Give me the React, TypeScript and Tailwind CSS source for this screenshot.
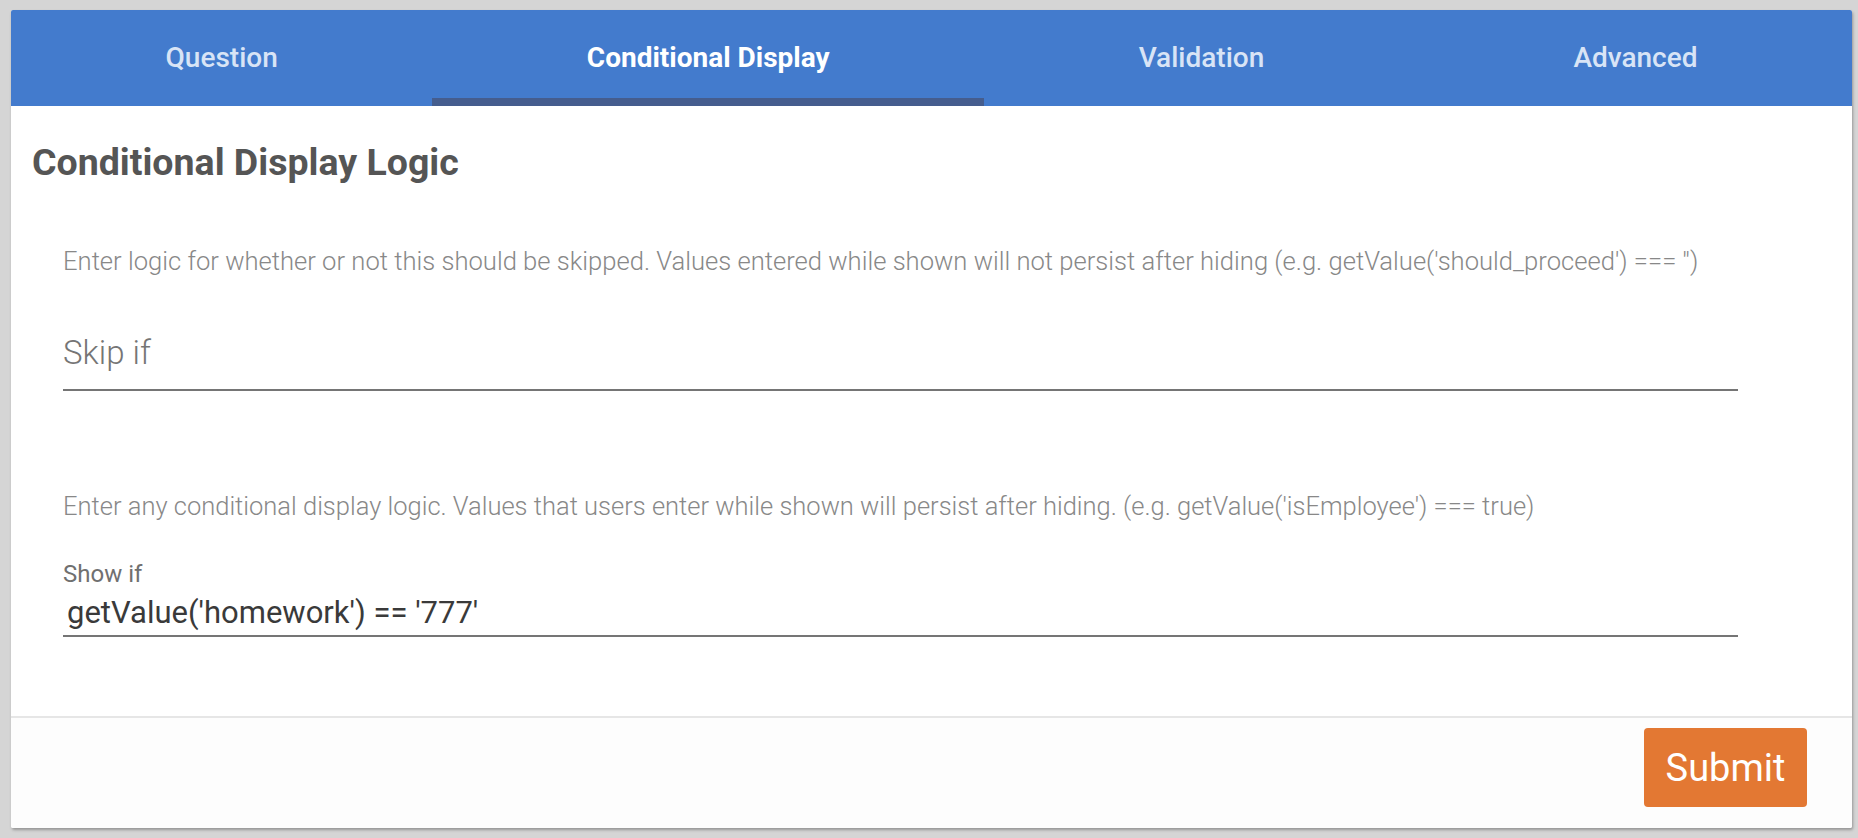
import React from "react";

const tabs = [
  { label: "Question", active: false },
  { label: "Conditional Display", active: true },
  { label: "Validation", active: false },
  { label: "Advanced", active: false },
];

export default function App() {
  return (
    <div
      className="w-full h-[838px] bg-[#d5d5d5] pl-[11px] pr-[6px] pt-[10px] pb-[10px]"
      style={{ fontFamily: "Roboto, 'Noto Sans', sans-serif" }}
    >
      <div className="h-full bg-white rounded-[2px] shadow-[1px_2px_3px_rgba(0,0,0,0.3)] flex flex-col overflow-hidden">
        {/* Tabs */}
        <div className="h-[96px] bg-[#437bcd] flex shrink-0">
          {tabs.map((t) => (
            <div
              key={t.label}
              className={
                t.active
                  ? "flex-auto relative flex items-center justify-center pb-[1px] text-[28px] font-bold text-white"
                  : "flex-auto relative flex items-center justify-center pb-[1px] text-[28px] font-medium text-[#d8e4f6]"
              }
            >
              {t.label}
              {t.active && (
                <div className="absolute left-0 right-0 bottom-0 h-[8px] bg-[#455d8e]" />
              )}
            </div>
          ))}
        </div>

        {/* Body */}
        <div className="flex-1 pl-[21px] pt-[34px]">
          <h1 className="text-[37.5px] leading-[44px] font-bold text-[#555555]">
            Conditional Display Logic
          </h1>
          <div className="ml-[31px] w-[1675px]">
            <p className="mt-[62px] text-[25.6px] leading-[30px] font-light text-[#888888] whitespace-nowrap">
              Enter logic for whether or not this should be skipped. Values entered while shown will not persist after hiding (e.g. getValue('should_proceed') === '')
            </p>
            <div className="mt-[57px]">
              <div className="text-[33px] leading-[40px] font-light text-[#757575]">Skip if</div>
              <div className="mt-[16px] h-[2px] bg-[#757575]" />
            </div>

            <p className="mt-[100px] text-[25.5px] leading-[30px] font-light text-[#888888] whitespace-nowrap">
              Enter any conditional display logic. Values that users enter while shown will persist after hiding. (e.g. getValue('isEmployee') === true)
            </p>
            <div className="mt-[39px]">
              <div className="text-[24px] leading-[28px] text-[#707070]">Show if</div>
              <div className="mt-[7px] pl-[4px] text-[31px] leading-[36px] text-[#3a3a3a]">
                getValue('homework') == '777'
              </div>
              <div className="mt-[4px] h-[2px] bg-[#757575]" />
            </div>
          </div>
        </div>

        {/* Footer */}
        <div className="h-[112px] shrink-0 border-t-2 border-[#e6e6e6] flex justify-end items-start pt-[10px] pr-[45px] bg-[#fdfdfd]">
          <button className="w-[163px] h-[79px] rounded-[4px] bg-[#e37833] text-white text-[38px] leading-none">
            Submit
          </button>
        </div>
      </div>
    </div>
  );
}
